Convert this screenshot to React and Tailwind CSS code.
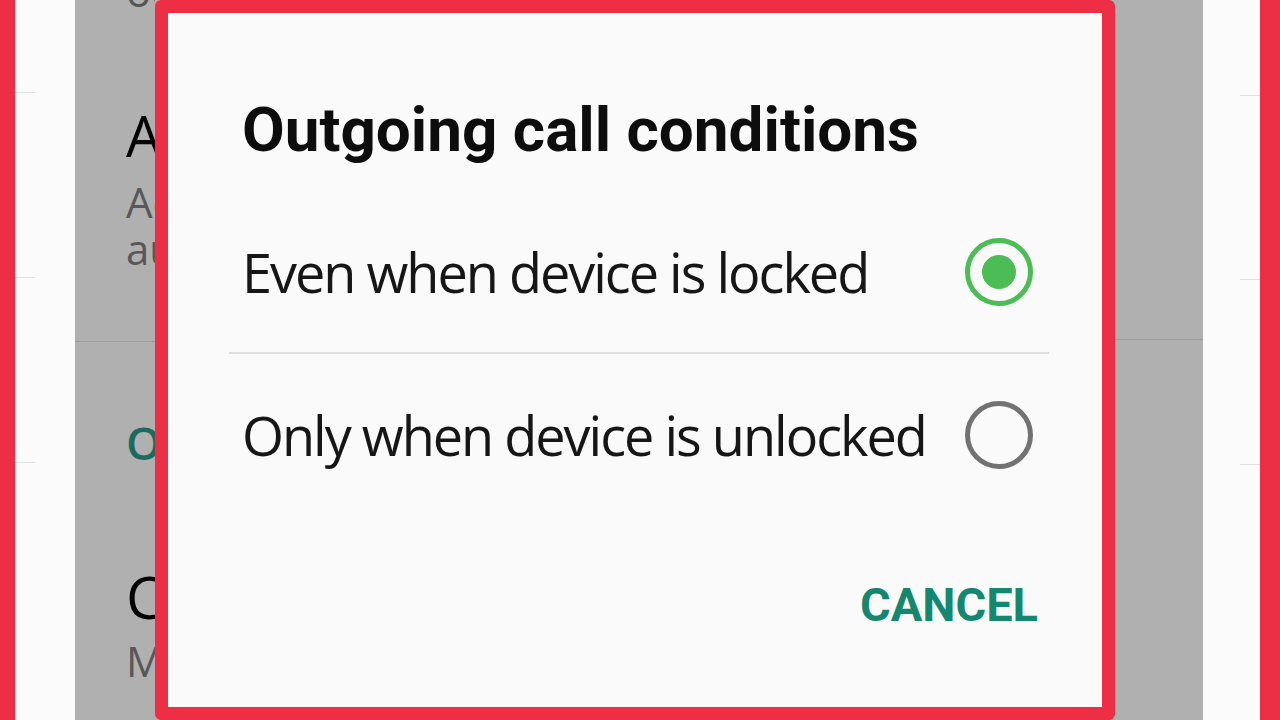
import React, { useState } from 'react';

const RED = 'bg-[#ee2e44]';

const OPTIONS = [
    { id: 'locked', label: 'Even when device is locked' },
    { id: 'unlocked', label: 'Only when device is unlocked' }
];

const Radio = ({ checked }) => (
    <div
        className={`w-[68px] h-[68px] rounded-full border-[5px] flex items-center justify-center shrink-0 ${
            checked ? 'border-[#4cbd55]' : 'border-[#727272]'
        }`}
    >
        {checked && <div className="w-[34px] h-[34px] rounded-full bg-[#4cbd55]"></div>}
    </div>
);

const SideStrip = ({ lineSide, heights }) => (
    <div className="h-full bg-[#fbfbfb] flex flex-col">
        {heights.map((h, i) => (
            <div key={i} className={`flex ${lineSide === 'left' ? 'justify-start' : 'justify-end'}`} style={{ height: h }}>
                <div className="w-[20px] self-end border-b border-[#e2e2e2]"></div>
            </div>
        ))}
    </div>
);

const App = () => {
    const [selected, setSelected] = useState('locked');

    return (
        <div className="relative w-[1280px] h-[720px] overflow-hidden" style={{ fontFamily: '"Open Sans", "Noto Sans", sans-serif' }}>
            {/* Settings page behind the dialog */}
            <div className="flex h-full">
                <div className={`w-[15px] h-full ${RED}`}></div>
                <div className="w-[60px] h-full">
                    <SideStrip lineSide="left" heights={[93, 185, 185]} />
                </div>

                <div className="w-[1128px] h-full bg-[#b0b0b0] flex">
                    {/* visible slice left of the dialog */}
                    <div className="w-[80px] h-full overflow-hidden whitespace-nowrap">
                        <div className="h-[12px] flex flex-col justify-end overflow-hidden pl-[51px]">
                            <div className="text-[42px] leading-none text-[#555]">oc</div>
                        </div>

                        <div className="pl-[51px] pt-[95px]">
                            <div className="text-[56px] leading-none text-black">Au</div>
                            <div className="mt-[15px] text-[42px] leading-[47px] text-[#585858]">
                                <div>Ac</div>
                                <div>au</div>
                            </div>
                        </div>

                        <div className="mt-[69px] border-b border-[#9c9c9c]"></div>

                        <div className="pl-[51px] pt-[78px]">
                            <div className="text-[45px] leading-none text-[#1b6b5c] font-semibold">O</div>
                        </div>

                        <div className="pl-[51px] pt-[103px]">
                            <div className="text-[58px] leading-none text-black">C</div>
                            <div className="mt-[11px] text-[42px] leading-[47px] text-[#585858]">M</div>
                        </div>
                    </div>

                    <div className="flex-1 h-full"></div>

                    {/* visible slice right of the dialog */}
                    <div className="w-[90px] h-full">
                        <div className="h-[340px] border-b border-[#9c9c9c]"></div>
                    </div>
                </div>

                <div className="w-[57px] h-full">
                    <SideStrip lineSide="right" heights={[96, 184, 185]} />
                </div>
                <div className={`w-[20px] h-full ${RED}`}></div>
            </div>

            {/* Dialog */}
            <div className="absolute left-[155px] top-0 w-[960px] h-[720px] border-[13px] border-[#ee2e44] rounded-[6px] bg-[#fafafa]">
                <div className="pl-[74px] pt-[86px]">
                    <h1 className="text-[62px] leading-none font-bold text-[#0d0d0d]" style={{ fontFamily: 'Roboto, sans-serif' }}>
                        Outgoing call conditions
                    </h1>
                </div>

                <div className="mt-[31px] ml-[61px] mr-[53px]">
                    {OPTIONS.map((opt, i) => (
                        <button
                            key={opt.id}
                            onClick={() => setSelected(opt.id)}
                            className={`w-full h-[162px] flex items-center justify-between pl-[13px] pr-[16px] text-left ${
                                i === 0 ? 'border-b-2 border-[#dedede]' : ''
                            }`}
                        >
                            <span className="text-[54px] leading-none text-[#161616] tracking-[-2px]">{opt.label}</span>
                            <Radio checked={selected === opt.id} />
                        </button>
                    ))}
                </div>

                <div className="flex justify-end pr-[64px] mt-[65px]">
                    <button className="text-[47px] leading-none font-bold text-[#16876f]" style={{ fontFamily: 'Roboto, sans-serif' }}>
                        CANCEL
                    </button>
                </div>
            </div>
        </div>
    );
};

export default App;
